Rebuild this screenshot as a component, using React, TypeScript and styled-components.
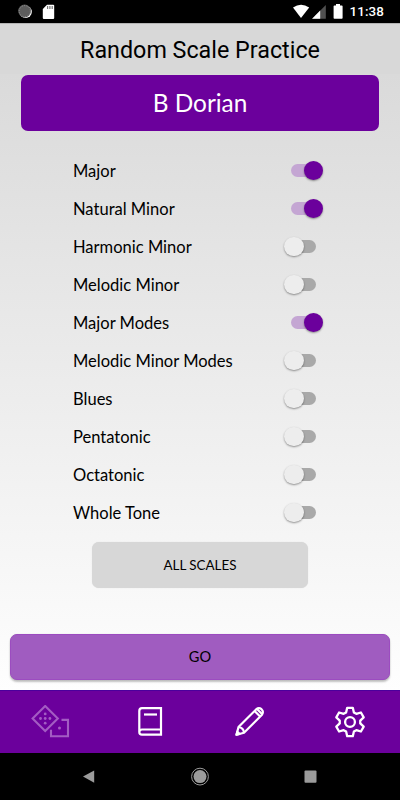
import React, { useState } from "react";
import styled, { createGlobalStyle } from "styled-components";

const PURPLE = "#6b009c";

const GlobalStyle = createGlobalStyle`
  * { box-sizing: border-box; }
  body { margin: 0; background: #000; }
`;

const Screen = styled.div`
  width: 400px;
  height: 800px;
  display: flex;
  flex-direction: column;
  overflow: hidden;
  font-family: Lato, sans-serif;
  color: #000;
`;

const StatusBar = styled.div`
  height: 23px;
  flex: none;
  display: flex;
  align-items: center;
  justify-content: space-between;
  background: #000;
`;

const Clock = styled.span`
  font: 500 13.4px/23px Roboto, sans-serif;
  letter-spacing: 0.1px;
  color: #fff;
  padding: 0 16px 0 0;
`;

const StatusGroup = styled.div`
  display: flex;
  align-items: center;
`;

const Header = styled.header`
  height: 51px;
  flex: none;
  border-top: 1px solid #b4b4b4;
  background: #d8d8d8;
  text-align: center;
`;

const Title = styled.h1`
  margin: 0;
  font: 400 23.3px/52px Roboto, sans-serif;
`;

const Content = styled.main`
  height: 616px;
  flex: none;
  display: flex;
  flex-direction: column;
  align-items: center;
  padding: 1px 10px 10px;
  background: linear-gradient(#dadada, #fefefe);
`;

const CurrentScale = styled.div`
  width: 358px;
  height: 56px;
  flex: none;
  border-radius: 7px;
  background: ${PURPLE};
  color: #fff;
  font-size: 24.4px;
  line-height: 56px;
  text-align: center;
`;

const ScaleList = styled.div`
  width: 254px;
  margin-top: 21px;
`;

const ScaleRow = styled.div`
  height: 38px;
  display: flex;
  align-items: center;
  justify-content: space-between;
  font-size: 16.55px;
  line-height: 20px;
`;

const Switch = styled.button<{ $on: boolean }>`
  width: 44px;
  height: 20px;
  padding: ${(p) => (p.$on ? "0 3.6px 1px 0" : "0 0 1px 1px")};
  border: 0;
  background: none;
  display: flex;
  align-items: center;
  justify-content: ${(p) => (p.$on ? "flex-end" : "flex-start")};
`;

const Track = styled.span<{ $on: boolean }>`
  width: 22px;
  height: 13px;
  margin: ${(p) => (p.$on ? "0 -9px 0 0" : "0 0 0 -9.6px")};
  border-radius: 7px;
  background: ${(p) => (p.$on ? "#c4a6d3" : "#a9a9a9")};
`;

const Thumb = styled.span<{ $on: boolean }>`
  width: 19.6px;
  height: 19.6px;
  z-index: 1;
  border-radius: 50%;
  background: ${(p) => (p.$on ? PURPLE : "#ededed")};
  box-shadow: 0 1px 2px rgba(0, 0, 0, 0.4);
`;

const AllButton = styled.button`
  width: 216px;
  height: 46px;
  flex: none;
  margin-top: 10px;
  padding: 0;
  border: 0;
  border-radius: 7px;
  background: #d7d7d7;
  box-shadow: 0 0 1px rgba(0, 0, 0, 0.15);
  color: #000;
  font: 400 13.4px Lato, sans-serif;
`;

const GoButton = styled.button`
  width: 380px;
  height: 46px;
  flex: none;
  margin-top: auto;
  padding: 0 0 2px;
  border: 1px solid #9c4cc0;
  border-radius: 7px;
  background: #a05cc0;
  box-shadow: 0 2px 2px rgba(0, 0, 0, 0.24), 0 0 1px rgba(0, 0, 0, 0.2);
  color: #000;
  font: 400 14.6px Lato, sans-serif;
`;

const TabBar = styled.nav`
  height: 63px;
  flex: none;
  display: grid;
  grid-template-columns: repeat(4, 100px);
  place-items: center;
  border-top: 1px solid #4b009c;
  background: ${PURPLE};
`;

const SystemBar = styled.div`
  height: 47px;
  flex: none;
  display: grid;
  grid-template-columns: 110px 110px 110px;
  justify-content: center;
  place-items: center;
  background: #000;
`;

const StatusLeft = () => (
  <svg width="70" height="23" viewBox="0 0 70 23">
    <circle cx="25.6" cy="11.9" r="6.2" fill="#fff" />
    <circle cx="24.6" cy="11" r="6.4" fill="#5c5c5c" />
    <circle cx="24.8" cy="11.2" r="5.6" fill="none" stroke="#999" strokeDasharray="1 1.5" />
    <path d="M47 4.7h6.2q1 0 1 1v12.2q0 1-1 1h-9.4q-1 0-1-1V9z" fill="#fff" />
    <path d="M47.6 6v3M49.9 6v3M52.2 6v3" stroke="#777" strokeWidth="1.2" />
  </svg>
);

const StatusRight = () => (
  <svg width="57" height="23" viewBox="293 0 57 23">
    <path d="M293 7.6Q301 1.8 309.2 7.6L301 18z" fill="#fff" />
    <path d="M325.8 5v13.7h-13.7z" fill="#505050" />
    <path d="M320.2 10.6v8.1h-8.1z" fill="#fff" />
    <path d="M336 4h4v1.4h1.8q.8 0 .8.8v11.7q0 .8-.8.8h-7.4q-.8 0-.8-.8V6.2q0-.8.8-.8h1.6z" fill="#fff" />
  </svg>
);

const DiceIcon = () => (
  <svg width="40" height="34" viewBox="30 704.5 40 34" fill="none" stroke="#a35cc3" strokeWidth="2.1">
    <path d="M45.2 705.5 57.8 718 45.2 730.5 32.6 718z" />
    <path d="M61.5 719.4H68v16.3H51v-6.5" />
    <g fill="#a35cc3" stroke="none">
      <circle cx="45.2" cy="713.4" r="1.4" />
      <circle cx="40.5" cy="718" r="1.4" />
      <circle cx="45.2" cy="718" r="1.4" />
      <circle cx="49.9" cy="718" r="1.4" />
      <circle cx="45.2" cy="722.7" r="1.4" />
      <circle cx="59.5" cy="727.5" r="1.5" />
    </g>
  </svg>
);

const BookIcon = () => (
  <svg width="32" height="32" viewBox="134 706 32 32" fill="none" stroke="#fff" strokeWidth="2.2">
    <path d="M161 729.8V708.2H142q-2.7 0-2.7 2.7v21.1q0 2.7 2.7 2.7h19v-5.2H142q-2.7 0-2.7 2.7" />
    <path d="M144 714.5h13" />
  </svg>
);

const PencilIcon = () => (
  <svg width="32" height="32" viewBox="234 706 32 32" fill="none" stroke="#fff" strokeWidth="2.2" strokeLinejoin="round">
    <path d="M236.5 734.7 238.5 727 256.3 709.2Q259 707.2 261.5 709.2 264 711.5 262 714.8L244 732.7z" />
    <path d="M238.5 727Q243.5 727.7 244 732.7M254.6 711l5.5 5.5M257 709l5.2 5.2" />
    <path d="M236.5 734.7l.8-3 2.2 2.2z" fill="#fff" />
  </svg>
);

const gearPoints = Array.from({ length: 6 }, (_, tooth) =>
  [[-3.9, -9.6], [-2.8, -14.2], [2.8, -14.2], [3.9, -9.6]].map(([x, y]) => {
    const a = (tooth * Math.PI) / 3;
    return `${(x * Math.cos(a) - y * Math.sin(a)).toFixed(2)},${(x * Math.sin(a) + y * Math.cos(a)).toFixed(2)}`;
  }).join(" ")
).join(" ");

const GearIcon = () => (
  <svg width="32" height="32" viewBox="-16 -16 32 32" fill="none" stroke="#fff" strokeWidth="2.3" strokeLinejoin="round">
    <polygon points={gearPoints} />
    <circle r="4.9" />
  </svg>
);

const SystemIcon = styled.svg`
  width: 22px;
  height: 22px;
  fill: #9b9b9b;
`;

const initialScales: [string, boolean][] = [
  ["Major", true],
  ["Natural Minor", true],
  ["Harmonic Minor", false],
  ["Melodic Minor", false],
  ["Major Modes", true],
  ["Melodic Minor Modes", false],
  ["Blues", false],
  ["Pentatonic", false],
  ["Octatonic", false],
  ["Whole Tone", false],
];

export default function App() {
  const [scales, setScales] = useState(initialScales);
  const toggle = (name: string) =>
    setScales(scales.map(([n, on]) => [n, n === name ? !on : on]));

  return (
    <Screen>
      <GlobalStyle />
      <StatusBar>
        <StatusLeft />
        <StatusGroup>
          <StatusRight />
          <Clock>11:38</Clock>
        </StatusGroup>
      </StatusBar>
      <Header>
        <Title>Random Scale Practice</Title>
      </Header>
      <Content>
        <CurrentScale>B Dorian</CurrentScale>
        <ScaleList>
          {scales.map(([name, on]) => (
            <ScaleRow key={name}>
              <span>{name}</span>
              <Switch $on={on} role="switch" aria-checked={on} aria-label={name} onClick={() => toggle(name)}>
                {on && <Track $on />}
                <Thumb $on={on} />
                {!on && <Track $on={false} />}
              </Switch>
            </ScaleRow>
          ))}
        </ScaleList>
        <AllButton onClick={() => setScales(scales.map(([n]) => [n, true]))}>ALL SCALES</AllButton>
        <GoButton>GO</GoButton>
      </Content>
      <TabBar>
        <DiceIcon />
        <BookIcon />
        <PencilIcon />
        <GearIcon />
      </TabBar>
      <SystemBar>
        <SystemIcon viewBox="0 0 22 22"><path d="M4 10.5 15.2 4.4v12.4z" /></SystemIcon>
        <SystemIcon viewBox="0 0 22 22">
          <circle cx="11" cy="10.6" r="6.5" />
          <circle cx="11" cy="10.6" r="8.4" fill="none" stroke="#9b9b9b" />
        </SystemIcon>
        <SystemIcon viewBox="0 0 22 22"><rect x="5.5" y="4.5" width="12" height="12.2" rx="1" /></SystemIcon>
      </SystemBar>
    </Screen>
  );
}
